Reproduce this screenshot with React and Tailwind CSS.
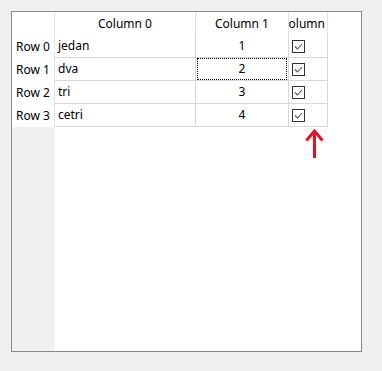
import React from 'react';

const rows = [
  { name: 'Row 0', text: 'jedan', num: '1' },
  { name: 'Row 1', text: 'dva', num: '2' },
  { name: 'Row 2', text: 'tri', num: '3' },
  { name: 'Row 3', text: 'cetri', num: '4' },
];

function CheckBox() {
  return (
    <svg width="13" height="13" viewBox="0 0 13 13" className="block">
      <rect x="0.5" y="0.5" width="12" height="12" fill="white" stroke="#333333" />
      <polyline points="3,6.5 5.5,9 10,4" fill="none" stroke="#555555" strokeWidth="1.1" />
    </svg>
  );
}

export default function App() {
  return (
    <div
      className="relative w-[382px] h-[371px] bg-[#f0f0f0] pt-[11px] pl-[11px] text-[12px] text-black"
      style={{ fontFamily: '"Segoe UI", "Noto Sans", sans-serif' }}
    >
      <div className="w-[351px] h-[341px] border border-[#888888] bg-white flex">
        {/* Row headers */}
        <div className="w-[43px] flex flex-col">
          <div className="h-[23px] bg-white border-r border-[#e3e3e3]" />
          {rows.map((r) => (
            <div key={r.name} className="h-[23px] bg-white border-r border-[#e3e3e3] flex items-center justify-center leading-none">
              {r.name}
            </div>
          ))}
          <div className="flex-1 bg-[#f0f0f0]" />
        </div>

        {/* Table body */}
        <div className="flex flex-col">
          <div className="flex h-[23px]">
            <div className="w-[141px] border-r border-[#e3e3e3] flex items-center justify-center">Column 0</div>
            <div className="w-[93px] border-r border-[#e3e3e3] flex items-center justify-center">Column 1</div>
            <div className="w-[39px] border-r border-[#e3e3e3] flex items-center justify-center overflow-hidden whitespace-nowrap">
              Column 2
            </div>
          </div>
          {rows.map((r, i) => (
            <div key={r.name} className="flex h-[23px] border-b border-[#d8d8d8]">
              <div className="w-[141px] border-r border-[#d8d8d8] flex items-center pl-[3px]">{r.text}</div>
              <div className="relative w-[93px] border-r border-[#d8d8d8] flex items-center justify-center">
                {r.num}
                {i === 1 && <div className="absolute left-[1px] right-[1px] top-0 bottom-0 border border-dotted border-black" />}
              </div>
              <div className="w-[39px] border-r border-[#d8d8d8] flex items-center pl-[3px]">
                <CheckBox />
              </div>
            </div>
          ))}
        </div>
      </div>

      {/* Red arrow annotation */}
      <svg className="absolute left-[305px] top-[129px]" width="19" height="29" viewBox="0 0 19 29">
        <polyline points="1.5,11.5 9.5,2 17.5,11.5" fill="none" stroke="#e81123" strokeWidth="3" />
        <line x1="9.5" y1="2" x2="9.5" y2="29" stroke="#e81123" strokeWidth="3" />
      </svg>
    </div>
  );
}
